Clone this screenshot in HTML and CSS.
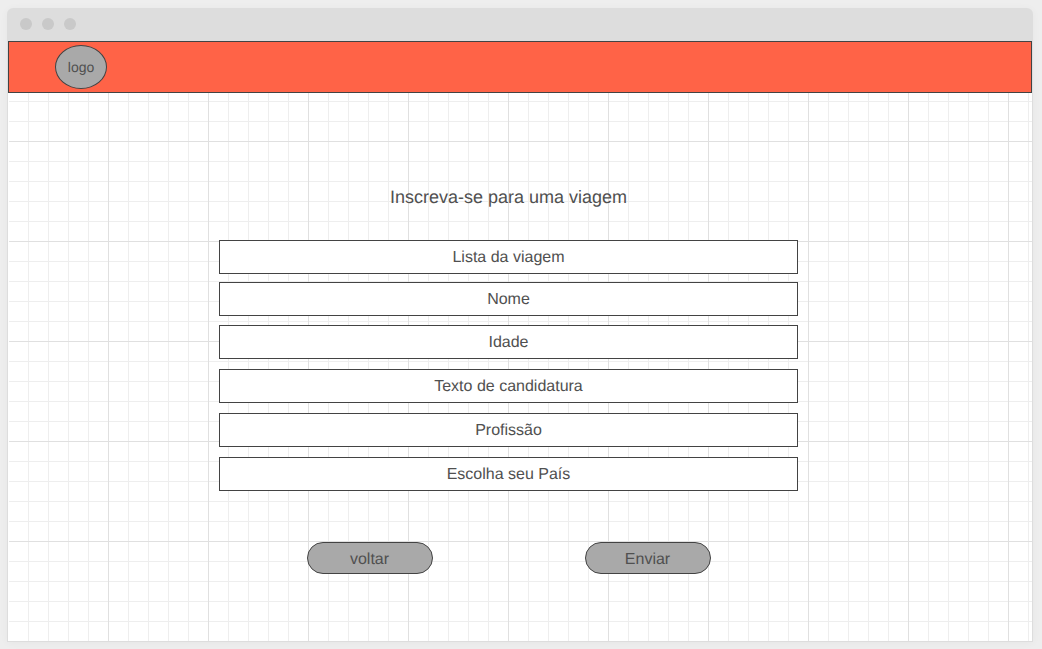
FILE: index.html
```html
<!DOCTYPE html>
<html lang="pt">
<head>
  <meta charset="utf-8">
  <meta name="viewport" content="width=device-width, initial-scale=1">
  <title>Inscreva-se para uma viagem</title>
  <link rel="stylesheet" href="styles.css">
</head>
<body>
  <div class="window">
    <div class="titlebar">
      <span class="dot"></span>
      <span class="dot"></span>
      <span class="dot"></span>
    </div>
    <div class="canvas">
      <header class="header">
        <a class="logo" href="#">logo</a>
      </header>
      <main class="main">
        <form class="form">
          <h1 class="title">Inscreva-se para uma viagem</h1>
          <div class="fields">
            <div class="group group-tight">
              <select class="field field-select" aria-label="Lista da viagem">
                <option>Lista da viagem</option>
              </select>
              <input class="field" type="text" placeholder="Nome" aria-label="Nome">
            </div>
            <div class="group">
              <input class="field" type="text" placeholder="Idade" aria-label="Idade">
              <input class="field" type="text" placeholder="Texto de candidatura" aria-label="Texto de candidatura">
              <input class="field" type="text" placeholder="Profissão" aria-label="Profissão">
              <select class="field field-select" aria-label="Escolha seu País">
                <option>Escolha seu País</option>
              </select>
            </div>
          </div>
          <div class="actions">
            <button class="button" type="button">voltar</button>
            <button class="button" type="submit">Enviar</button>
          </div>
        </form>
      </main>
    </div>
  </div>
</body>
</html>
```

FILE: styles.css
```css
* {
  box-sizing: border-box;
}

body {
  display: flex;
  min-height: 100vh;
  margin: 0;
  padding: 8px 9px 7px 7px;
  background: #eee;
  color: #505050;
  font-family: "Liberation Sans", Arial, sans-serif;
  font-size: 16px;
  text-rendering: geometricPrecision;
}

.window {
  display: flex;
  flex: 1;
  flex-direction: column;
  border-radius: 6px 6px 0 0;
  box-shadow: 0 1px 8px rgba(0, 0, 0, 0.04);
}

.titlebar {
  display: flex;
  gap: 10px;
  height: 33px;
  padding: 10px 13px;
  border-radius: 6px 6px 0 0;
  background: #ddd;
}

.dot {
  width: 12px;
  height: 12px;
  border-radius: 50%;
  background: #c9c9c9;
}

/* Grid paper: a line every 20px, a darker one every 100px */
.canvas {
  flex: 1;
  border: solid #ddd;
  border-width: 0 1px 1px;
  background-color: #fff;
  background-image:
    linear-gradient(to right, transparent 99px, #e0e0e0 99px),
    linear-gradient(to bottom, transparent 99px, #e0e0e0 99px),
    linear-gradient(to right, transparent 19px, #eee 19px),
    linear-gradient(to bottom, transparent 19px, #eee 19px);
  background-position: 1px 1px;
  background-size: 100px 100px, 100px 100px, 20px 20px, 20px 20px;
  box-shadow: inset 1px 0 #fff;
}

.header {
  display: flex;
  align-items: center;
  height: 52px;
  padding: 0 46px;
  border: 1px solid #434343;
  background: #ff6347;
}

.logo {
  display: flex;
  align-items: center;
  justify-content: center;
  width: 52px;
  height: 44px;
  border: 1px solid #434343;
  border-radius: 50%;
  background: #a9a9a9;
  color: #505050;
  font-size: 14px;
  text-decoration: none;
}

.main {
  display: flex;
  justify-content: center;
  padding: 92px 23px 24px 0;
}

.form {
  width: 100%;
  max-width: 579px;
}

.title {
  margin: 0 0 31px;
  font-size: 18px;
  font-weight: 400;
  line-height: 24px;
  text-align: center;
}

.fields {
  display: grid;
  gap: 9px;
}

.group {
  display: grid;
  gap: 10px;
}

.group-tight {
  gap: 8px;
}

.field {
  width: 100%;
  height: 34px;
  padding: 2px 8px 0;
  border: 1px solid #434343;
  border-radius: 0;
  background: #fff;
  color: #505050;
  font: inherit;
  text-align: center;
  text-align-last: center;
  text-rendering: inherit;
  appearance: none;
}

.field-select {
  padding: 0 8px;
}

.field::placeholder {
  color: #505050;
  opacity: 1;
}

.actions {
  display: flex;
  flex-wrap: wrap;
  justify-content: center;
  gap: 16px 152px;
  margin-top: 51px;
}

.button {
  width: 126px;
  height: 32px;
  padding: 4px 0 0;
  border: 1px solid #434343;
  border-radius: 16px;
  background: #a9a9a9;
  color: #505050;
  font: inherit;
  text-rendering: inherit;
}
```
